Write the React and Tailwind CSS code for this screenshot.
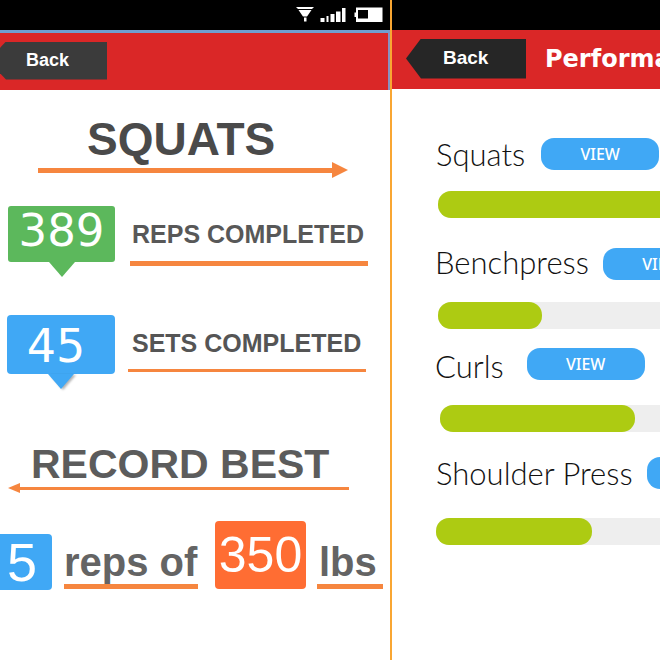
import React from "react";

const exercises = [
  { name: "Squats", fill: 260, row: "mt-[49px] items-center gap-[16px] pl-[44px]", bar: "mt-[21px] ml-[46px]" },
  { name: "Benchpress", fill: 104, row: "mt-[30px] items-start gap-[14px] pl-[43px]", bar: "mt-[22px] ml-[46px]" },
  { name: "Curls", fill: 195, row: "mt-[19px] items-end gap-[23px] pl-[43px]", bar: "mt-[25px] ml-[48px]" },
  { name: "Shoulder Press", fill: 156, row: "mt-[25px] items-center gap-[14px] pl-[44px]", bar: "mt-[29px] ml-[44px]" },
];

function StatusIcons() {
  return (
    <svg width="88" height="16" viewBox="0 0 88 16" fill="#fff" aria-hidden="true">
      <path d="M0 0h18l-2 2H2z" />
      <path d="M2.500 3h13l-4.500 6.500H7z" />
      <rect x="8" y="10.500" width="2.500" height="4" />
      <rect x="24.500" y="11" width="4" height="4" />
      <rect x="30.500" y="9" width="2" height="6" />
      <rect x="34.500" y="7" width="4" height="8" />
      <rect x="40" y="4.500" width="4.500" height="10.500" />
      <rect x="46" y="1" width="3.500" height="14" />
      <path fillRule="evenodd" d="M60 .500h26.500v14.500H60v-5h-1.500V5.500H60zM62 3v8.500h10V3z" />
    </svg>
  );
}

function Tail({ className }) {
  return (
    <svg className={className} width="26" height="15" viewBox="0 0 26 15" fill="currentColor" aria-hidden="true">
      <path d="M0 0h26L13 15z" />
    </svg>
  );
}

function WorkoutPanel() {
  return (
    <section className="min-w-0 flex-[390] overflow-hidden border-r-2 border-[#f9a632] bg-white">
      <div className="flex h-[30px] items-center justify-end bg-black pr-[6px]">
        <StatusIcons />
      </div>
      <header className="flex h-[60px] items-center border-t-[3px] border-r-2 border-t-[#6f9fd0] border-r-[#8791c0] bg-[#da2727] pb-[2px]">
        <button className="-ml-3 h-[38px] w-[119px] bg-[#3b3b3b] pl-[38px] text-left text-[18px] font-bold text-white [clip-path:polygon(0_50%,18px_0,100%_0,100%_100%,18px_100%)]">
          Back
        </button>
      </header>

      <h1 className="mt-[26px] pl-[87px] text-[46px] leading-[46px] font-bold text-[#4a4a4a]">SQUATS</h1>
      <div className="mr-[42px] ml-[38px] flex items-center">
        <div className="h-[5px] flex-1 bg-[#f6863f]" />
        <svg width="16" height="16" viewBox="0 0 16 16" fill="#f6863f" aria-hidden="true">
          <path d="M0 0l16 8L0 16z" />
        </svg>
      </div>

      <div className="mt-7 flex items-start pl-2">
        <div className="flex w-[107px] flex-col items-center">
          <div className="h-14 w-full rounded-[3px] bg-[#5cb85c] text-center font-['DejaVu_Sans',sans-serif] text-[45px] leading-[50px] text-white">
            389
          </div>
          <Tail className="text-[#5cb85c]" />
        </div>
        <h2 className="mt-[14px] ml-[15px] w-[238px] border-b-[5px] border-[#f6863f] pb-[13px] pl-[2px] text-[25px] leading-7 font-bold whitespace-nowrap text-[#585858]">
          REPS COMPLETED
        </h2>
      </div>

      <div className="mt-[38px] flex items-start pl-[7px]">
        <div className="flex w-[108px] flex-col items-center">
          <div className="h-[59px] w-full rounded-[4px] bg-[#40a8f5] pr-[10px] text-center font-['DejaVu_Sans',sans-serif] text-[46px] leading-[62px] text-white">
            45
          </div>
          <Tail className="text-[#40a8f5] drop-shadow-[2px_1px_1px_rgba(0,0,0,0.3)]" />
        </div>
        <h2 className="mt-[14px] ml-[13px] w-[238px] border-b-[3px] border-[#f6863f] pb-3 pl-[4px] text-[25px] leading-7 font-bold whitespace-nowrap text-[#555]">
          SETS COMPLETED
        </h2>
      </div>

      <h1 className="mt-[56px] pl-[31px] text-[41px] leading-[38px] font-bold whitespace-nowrap text-[#5c5c5c]">RECORD BEST</h1>
      <div className="mr-[41px] ml-2 flex items-center">
        <svg width="12" height="10" viewBox="0 0 12 10" fill="#f6863f" aria-hidden="true">
          <path d="M12 0L0 5l12 5z" />
        </svg>
        <div className="h-[3px] flex-1 bg-[#f6863f]" />
      </div>

      <div className="mt-[28px] flex items-start font-bold whitespace-nowrap text-[#646464]">
        <div className="mt-[13px] h-14 w-[52px] rounded-r-[4px] bg-[#40a8f5] pl-[7px] text-[54px] leading-14 font-normal text-white">5</div>
        <div className="mt-[20px] ml-3 w-[134px] border-b-[5px] border-[#f6863f] text-[40px] leading-[43px]">reps of</div>
        <div className="ml-[17px] h-[68px] w-[91px] rounded-[4px] bg-[#ff6d33] text-center text-[50px] leading-[68px] font-normal text-white">350</div>
        <div className="mt-[20px] ml-[11px] w-[66px] border-b-[5px] border-[#f6863f] pl-[2px] text-[40px] leading-[43px]">lbs</div>
      </div>
    </section>
  );
}

function PerformancePanel() {
  return (
    <section className="min-w-0 flex-[268] overflow-hidden bg-white">
      <div className="h-[30px] bg-black" />
      <header className="flex h-[59px] items-center bg-[#da2727] pb-[2px] pl-[14px] whitespace-nowrap">
        <button className="h-10 w-[120px] shrink-0 bg-[#262626] pl-[37px] text-left text-[19px] font-bold text-white [clip-path:polygon(0_50%,15px_0,100%_0,100%_100%,15px_100%)]">
          Back
        </button>
        <h1 className="ml-[19px] font-['DejaVu_Sans',sans-serif] text-[24px] leading-8 font-bold text-white">Performance</h1>
      </header>
      {exercises.map((item) => (
        <div key={item.name}>
          <div className={"flex h-8 " + item.row}>
            <h2 className="shrink-0 font-['Lato',sans-serif] text-[31px] leading-7 font-light whitespace-nowrap text-[#111]">
              {item.name}
            </h2>
            <button className="h-8 w-[118px] shrink-0 rounded-[13px] bg-[#40a8f5] font-['Noto_Sans',sans-serif] text-[16px] font-medium text-white">
              VIEW
            </button>
          </div>
          <div className={"h-[27px] rounded-l-[13px] bg-[#eee] " + item.bar}>
            <div className="h-full rounded-[13px] bg-[#adcb12]" style={{ width: item.fill }} />
          </div>
        </div>
      ))}
    </section>
  );
}

export default function App() {
  return (
    <main className="flex min-h-screen overflow-hidden bg-white font-['Liberation_Sans',Arial,sans-serif]">
      <WorkoutPanel />
      <PerformancePanel />
    </main>
  );
}
